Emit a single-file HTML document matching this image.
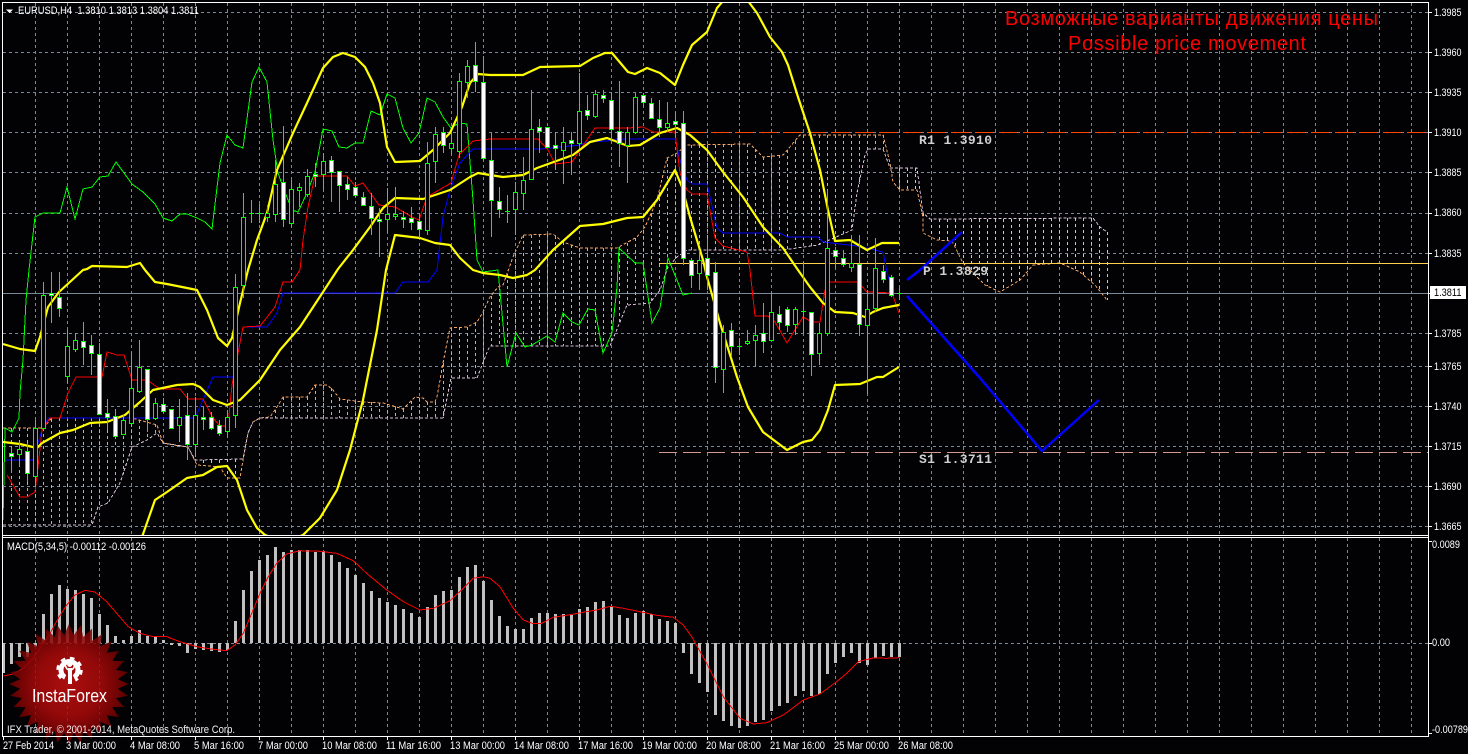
<!DOCTYPE html>
<html><head><meta charset="utf-8"><title>EURUSD,H4</title>
<style>
html,body{margin:0;padding:0;background:#020205;width:1468px;height:754px;overflow:hidden}
svg{display:block}
text{font-family:"Liberation Sans","Noto Sans CJK SC",sans-serif;font-size:11px;fill:#fff}
.m{font-family:"Liberation Mono",monospace;font-weight:bold;font-size:13px;fill:#d0d0d0}
.thin{shape-rendering:crispEdges}
</style></head><body>
<svg id="s" xmlns="http://www.w3.org/2000/svg" width="1468" height="754" viewBox="0 0 1468 754">
<defs>
<clipPath id="cm"><rect x="3" y="3" width="1425" height="532"/></clipPath>
<clipPath id="cs"><rect x="3" y="539" width="1425" height="197"/></clipPath>
<radialGradient id="rg" cx="50%" cy="50%" r="50%"><stop offset="0" stop-color="#c81010"/><stop offset=".55" stop-color="#aa0a0a"/><stop offset="1" stop-color="#6a0000"/></radialGradient>
</defs>
<rect width="1468" height="754" fill="#020205"/>
<g id="grid" shape-rendering="crispEdges" stroke="#778899" stroke-dasharray="3 3" fill="none"></g>
<g clip-path="url(#cm)">
<g id="cloud" shape-rendering="crispEdges" fill="none" stroke-dasharray="3 3"></g>
<polyline id="spA" class="thin" fill="none" stroke="#f4a460" stroke-dasharray="3 2"/>
<polyline id="spB" class="thin" fill="none" stroke="#d8bfd8" stroke-dasharray="3 2"/>
<path d="M659 263.500H1428" stroke="#ffd050" fill="none" shape-rendering="crispEdges"/>
<path d="M687 132.500H1428" stroke="#ff4500" stroke-dasharray="18 6" fill="none" shape-rendering="crispEdges"/>
<path d="M659 452.500H1428" stroke="#d09a8c" stroke-dasharray="18 6" fill="none" shape-rendering="crispEdges"/>
<polyline class="thin" fill="none" stroke="#00ff00" points="3,520 5,428 12,432 19,418 20,393 23,360 26,300 29,270 35,217 43,213 60,213 67,187 75,219 83,189 92,187 100,177 108,176 116,162 132,184 143,192 155,204 163,218 172,221 180,214 187,214 197,218 205,222 212,229 220,163 227,135 235,145 243,148 252,82 259,67 267,82 273,140 278,173 283,187 292,210 298,212 307,193 315,172 323,129 332,131 339,147 347,148 355,143 363,143 371,111 380,115 387,94 395,98 403,128 411,143 419,133 427,98 435,102 443,117 451,128 459,123 467,124 473,200 477,260 483,272 498,270 507,367 516,333 525,347 532,345 547,336 555,342 563,313 572,322 579,325 588,309 595,310 603,353 612,333 617,287 619,248 635,263 643,263 652,323 660,308 668,258 683,295 692,293"/>
<polyline class="thin" fill="none" stroke="#0000ff" points="5,460 33,460 42,430 48,418 195,418 213,377 233,377 243,327 267,327 277,313 283,293 395,293 403,282 428,282 437,270 443,217 450,190 460,163 473,149 540,149 580,145 587,142 607,141 617,139 675,139 680,160 687,180 692,184 707,184 717,228 723,233 780,233 787,237 818,237 823,242 857,246 867,248 883,252 887,272 892,290"/>
<polyline class="thin" fill="none" stroke="#ff0000" points="7,475 20,497 27,497 35,492 38,467 42,430 50,418 60,418 68,393 76,377 102,377 107,352 117,355 124,355 132,380 147,380 160,389 180,389 188,399 203,399 213,418 220,426 228,426 232,385 243,327 260,326 275,307 283,282 292,282 300,270 303,240 308,207 315,176 347,176 355,186 363,183 379,205 395,207 412,217 419,220 427,197 451,183 459,155 473,141 490,139 538,139 548,150 555,164 572,162 595,128 628,128 643,127 653,132 675,132 680,173 687,190 692,194 707,194 715,238 723,246 747,252 750,270 755,316 768,316 775,322 787,343 803,317 812,322 820,322 825,290 829,282 858,282 867,292 892,293 899,313"/>
<g fill="none" stroke="#ffff00" stroke-width="2.2" stroke-linejoin="round">
<polyline points="3,344 20,349 35,351 40,337 48,307 59,292 83,270 87,269 92,266 127,267 140,263 145,270 155,282 167,284 197,290 207,310 218,338 227,346 232,338 240,303 248,270 257,240 267,213 277,170 293,133 307,103 323,68 333,57 343,53 355,57 365,67 373,83 380,103 387,147 395,162 420,161 433,150 450,133 462,107 470,83 478,74 490,75 523,75 540,67 580,66 593,58 605,53 612,53 628,72 635,74 647,68 660,73 675,85 683,65 692,45 707,32 717,8 723,1 735,-6 748,1 757,13 770,37 782,52 788,65 798,97 810,133 820,170 828,210 835,241 850,240 867,250 882,243 899,243"/>
<polyline points="3,442 20,444 37,448 42,443 60,433 73,430 90,423 107,422 125,415 140,402 153,390 177,385 193,384 200,387 213,400 227,405 240,400 260,380 280,350 300,327 323,292 338,269 353,250 370,227 383,208 395,198 423,199 450,190 470,177 478,173 490,175 503,177 523,175 537,168 573,155 590,142 607,138 628,146 640,145 660,133 677,128 690,135 707,150 723,172 743,197 763,227 783,248 798,270 810,287 823,303 835,312 853,313 865,317 873,312 883,308 899,305"/>
<polyline points="142,537 155,500 167,492 187,478 203,475 217,467 227,466 237,480 247,510 257,528 265,535 285,542 303,535 320,518 337,490 350,450 363,400 377,330 386,270 395,235 420,238 435,243 450,245 460,258 473,270 483,273 500,275 513,278 527,275 535,270 553,250 580,226 603,224 627,218 643,217 657,200 675,170 682,187 690,217 703,260 707,277 720,323 737,377 748,407 763,432 787,450 803,442 812,440 820,430 828,410 835,385 860,384 877,377 883,377 899,367"/>
</g>
<g id="candles" shape-rendering="crispEdges"></g>
<g fill="none" stroke="#0000ff" stroke-width="2.5">
<polyline points="907,280 920,270 962,232"/>
<polyline points="907,296 980,378 1042,451 1099,400"/>
</g>
</g>
<g clip-path="url(#cs)">
<g id="bars" shape-rendering="crispEdges" fill="#c0c0c0"></g>
<polyline id="sig" class="thin" fill="none" stroke="#ff0000"/>
</g>
<polygon id="star" fill="url(#rg)" fill-opacity=".86"/>
<g fill="none" stroke="#fff">
<circle cx="69.500" cy="670" r="8.500" stroke-width="5"/>
<circle cx="69.500" cy="670" r="11.500" stroke-width="3.500" stroke-dasharray="4.500 4.530"/>
</g>
<path d="M62 684L69.500 668L77 684Z" fill="#a80c0c"/>
<rect x="68" y="668" width="4" height="16" fill="#fff"/>
<circle cx="69.700" cy="664.500" r="2.500" fill="#fff"/>
<path d="M65 664Q66 670 70 670Q74 670 75 664" fill="none" stroke="#fff" stroke-width="1.600"/>
<text x="32" y="702" textLength="75" lengthAdjust="spacingAndGlyphs" style="font-size:18px">InstaForex</text>
<g shape-rendering="crispEdges" fill="#fff" id="frame">
<rect x="2" y="2" width="1427" height="1"/>
<rect x="2" y="2" width="1" height="734"/>
<rect x="1428" y="2" width="1" height="734"/>
<rect x="2" y="535" width="1427" height="1"/>
<rect x="2" y="537" width="1427" height="1"/>
<rect x="2" y="736" width="1427" height="1"/>
</g>
<rect x="1430" y="286" width="36" height="13" fill="#fff" shape-rendering="crispEdges"/>
<path d="M6 9.500H13L9.500 13Z" fill="#fff"/>
<g lengthAdjust="spacingAndGlyphs">
<text x="18" y="14" textLength="181" lengthAdjust="spacingAndGlyphs">EURUSD,H4&#160;&#160;1.3810 1.3813 1.3804 1.3811</text>
<text x="7" y="550" textLength="139" lengthAdjust="spacingAndGlyphs">MACD(5,34,5) -0.00112 -0.00126</text>
<text x="7" y="733" textLength="228" lengthAdjust="spacingAndGlyphs" fill-opacity=".95">IFX Trader, © 2001-2014, MetaQuotes Software Corp.</text>
</g>
<text x="1005" y="25" textLength="373" style="font-size:20px;fill:#ff0000">Возможные варианты движения цены</text>
<text x="1068" y="50" textLength="238" style="font-size:20px;fill:#ff0000">Possible price movement</text>
<text class="m" x="919" y="144" textLength="73">R1 1.3910</text>
<text class="m" x="923" y="275" textLength="65">P 1.3829</text>
<text class="m" x="919" y="463" textLength="73">S1 1.3711</text>
<g>
<text x="1434" y="16" textLength="27.500" lengthAdjust="spacingAndGlyphs">1.3985</text><text x="1434" y="56" textLength="27.500" lengthAdjust="spacingAndGlyphs">1.3960</text><text x="1434" y="96" textLength="27.500" lengthAdjust="spacingAndGlyphs">1.3935</text><text x="1434" y="136" textLength="27.500" lengthAdjust="spacingAndGlyphs">1.3910</text><text x="1434" y="176" textLength="27.500" lengthAdjust="spacingAndGlyphs">1.3885</text><text x="1434" y="216" textLength="27.500" lengthAdjust="spacingAndGlyphs">1.3860</text><text x="1434" y="257" textLength="27.500" lengthAdjust="spacingAndGlyphs">1.3835</text>
<text x="1434" y="296" textLength="27.500" lengthAdjust="spacingAndGlyphs" style="fill:#000">1.3811</text>
<text x="1434" y="337" textLength="27.500" lengthAdjust="spacingAndGlyphs">1.3785</text><text x="1434" y="370" textLength="27.500" lengthAdjust="spacingAndGlyphs">1.3765</text><text x="1434" y="410" textLength="27.500" lengthAdjust="spacingAndGlyphs">1.3740</text><text x="1434" y="450" textLength="27.500" lengthAdjust="spacingAndGlyphs">1.3715</text><text x="1434" y="490" textLength="27.500" lengthAdjust="spacingAndGlyphs">1.3690</text><text x="1434" y="530" textLength="27.500" lengthAdjust="spacingAndGlyphs">1.3665</text>
<text x="1432" y="548" textLength="28" lengthAdjust="spacingAndGlyphs">0.0089</text><text x="1432" y="646" textLength="18" lengthAdjust="spacingAndGlyphs">0.00</text><text x="1432" y="733" textLength="36" lengthAdjust="spacingAndGlyphs">-0.00789</text>
</g>
<g>
<text x="3" y="749" textLength="51" lengthAdjust="spacingAndGlyphs">27 Feb 2014</text><text x="66" y="749" textLength="50" lengthAdjust="spacingAndGlyphs">3 Mar 00:00</text><text x="130" y="749" textLength="50" lengthAdjust="spacingAndGlyphs">4 Mar 08:00</text><text x="194" y="749" textLength="50" lengthAdjust="spacingAndGlyphs">5 Mar 16:00</text><text x="258" y="749" textLength="50" lengthAdjust="spacingAndGlyphs">7 Mar 00:00</text><text x="322" y="749" textLength="55" lengthAdjust="spacingAndGlyphs">10 Mar 08:00</text><text x="386" y="749" textLength="55" lengthAdjust="spacingAndGlyphs">11 Mar 16:00</text><text x="450" y="749" textLength="55" lengthAdjust="spacingAndGlyphs">13 Mar 00:00</text><text x="514" y="749" textLength="55" lengthAdjust="spacingAndGlyphs">14 Mar 08:00</text><text x="578" y="749" textLength="55" lengthAdjust="spacingAndGlyphs">17 Mar 16:00</text><text x="642" y="749" textLength="55" lengthAdjust="spacingAndGlyphs">19 Mar 00:00</text><text x="706" y="749" textLength="55" lengthAdjust="spacingAndGlyphs">20 Mar 08:00</text><text x="770" y="749" textLength="55" lengthAdjust="spacingAndGlyphs">21 Mar 16:00</text><text x="834" y="749" textLength="55" lengthAdjust="spacingAndGlyphs">25 Mar 00:00</text><text x="898" y="749" textLength="55" lengthAdjust="spacingAndGlyphs">26 Mar 08:00</text>
</g>
</svg>
<script>
(function(){
function $(i){return document.getElementById(i)}
var h='',ys=[12,52,92,132,172,213,253,333,366,406,446,486,526,643];
ys.forEach(function(y){h+='<path d="M3 '+(y+.5)+'H1428"/>'});
h+='<path d="M3 293.500H1428" stroke-dasharray="none"/>';
for(var x=35;x<1428;x+=32){h+='<path d="M'+(x+.5)+' 3V535M'+(x+.5)+' 538V736"/>'}
$('grid').innerHTML=h;
var A=[3,428,43,428,52,418,132,418,157,425,163,443,180,446,188,447,197,465,220,467,227,478,240,478,243,460,248,433,253,422,260,418,270,417,277,407,283,397,307,397,315,385,327,385,333,390,340,399,363,402,383,403,403,409,415,397,423,398,427,402,435,402,437,397,443,363,450,328,467,327,477,322,483,312,490,297,498,287,503,285,513,257,523,235,553,234,563,242,580,248,617,248,637,237,645,227,657,200,667,158,677,153,687,145,750,144,763,157,783,155,800,135,883,135,890,163,893,182,900,190,917,190,923,217,923,233,937,240,952,241,963,263,985,285,1000,292,1020,280,1033,265,1060,263,1080,272,1095,285,1107,300];
var B=[3,525,92,525,98,507,108,503,120,483,132,447,147,440,157,433,163,443,188,447,195,460,243,459,248,433,253,422,260,418,443,418,451,378,477,378,488,350,490,346,610,346,627,305,650,303,660,290,668,267,677,257,687,250,783,250,818,245,852,230,857,193,865,155,868,149,883,149,890,168,917,168,923,213,930,219,1093,218,1100,227,1107,232];
function pts(a){var s='';for(var i=0;i<a.length;i+=2)s+=a[i]+','+a[i+1]+' ';return s}
function at(a,x){for(var i=0;i<a.length-2;i+=2){if(x>=a[i]&&x<=a[i+2]){var d=a[i+2]-a[i];return d?a[i+1]+(a[i+3]-a[i+1])*(x-a[i])/d:a[i+1]}}return a[a.length-1]}
$('spA').setAttribute('points',pts(A));$('spB').setAttribute('points',pts(B));
h='';
for(x=11;x<=1107;x+=8){var a=Math.round(at(A,x)),b=Math.round(at(B,x));if(Math.abs(a-b)<3)continue;
h+='<path d="M'+(x+.5)+' '+Math.min(a,b)+'V'+Math.max(a,b)+'" stroke="'+(a<b?'#f4a460':'#d8bfd8')+'"/>'}
$('cloud').innerHTML=h;
var C=[[453,456,447,473,1],[449,454,442,467,0],[451,473,443,482,1],[428,476,420,487,0],[295,428,282,430,0],[293,295,272,323,1],[297,308,272,317,1],[346,376,330,383,0],[340,349,333,352,0],[341,347,322,365,1],[345,353,335,375,1],[354,414,343,415,1],[413,417,399,430,1],[416,436,409,438,1],[420,434,415,435,0],[388,423,352,423,0],[367,391,340,393,0],[369,419,369,432,1],[403,418,398,420,0],[404,411,398,413,1],[409,428,409,429,1],[417,425,399,442,0],[415,444,393,460,1],[415,444,397,457,0],[417,419,407,430,1],[417,428,412,430,1],[425,433,420,436,1],[417,431,410,438,0],[287,415,274,428,0],[217,285,193,298,0],
[213,214,200,223,2],[213,214,204,223,2],[213,217,205,222,0],[184,214,160,222,0],[182,219,126,227,1],[189,223,180,227,0],[187,190,183,207,0],[176,194,169,197,0],[174,176,163,187,1],[161,174,153,190,0],[160,172,156,202,1],[171,185,171,212,1],[184,189,177,200,1],[187,195,182,197,1],[197,205,192,206,1],[206,218,193,235,1],[219,221,208,257,1],[214,219,188,233,0],[214,216,187,220,0],[217,219,211,228,1],[218,222,207,230,1],[221,229,213,238,1],[163,230,142,235,0],[134,161,127,183,0],[132,145,127,153,1],[143,148,132,155,0],[81,151,73,158,0],[66,82,60,98,0],[65,81,42,92,1],[82,158,56,160,1],
[160,200,133,237,1],[201,209,187,218,1],[211,212,195,223,2],[192,209,182,235,0],[180,193,157,210,0],[129,179,90,180,0],[127,131,119,153,1],[127,147,127,148,1],[145,148,132,170,1],[142,150,127,184,0],[140,143,132,175,1],[111,143,73,147,0],[110,115,95,120,1],[94,116,90,118,0],[95,98,90,103,1],[100,129,92,140,1],[131,143,81,167,1],[132,145,127,183,0],[97,132,93,134,0],[95,102,93,107,1],[103,118,98,119,1],[119,127,100,137,1],[123,127,102,132,0],[121,124,112,138,1],[123,258,111,265,1],[260,275,258,288,1],[260,273,250,290,0],[258,275,238,290,1],[272,367,262,383,1],[332,369,325,393,0],[330,346,323,357,1],[346,347,338,355,2],[341,343,330,345,0],[335,340,325,367,0],[333,341,303,353,1],[312,340,293,341,0],[314,322,306,330,1],[309,325,307,332,1],[309,324,307,335,0],[311,312,262,333,2],[312,354,312,376,1],[333,353,323,365,0],[248,333,190,336,0],[250,256,247,268,1],[258,264,250,267,1],[263,267,235,272,0],[264,324,235,336,1],[309,325,290,394,0],[268,308,238,312,0],[271,279,265,283,1],[277,295,275,297,1],[293,294,286,300,2]];
h='';
C.forEach(function(c,i){x=11+8*i;
h+='<rect x="'+x+'" y="'+c[2]+'" width="1" height="'+(c[3]-c[2])+'" fill="#00ff00"/>';
if(c[4]==2){h+='<rect x="'+(x-2)+'" y="'+c[0]+'" width="5" height="1" fill="#00ff00"/>';return}
h+='<rect x="'+(x-2)+'" y="'+c[0]+'" width="5" height="'+(c[1]-c[0]+1)+'" fill="#00ff00"/>';
h+='<rect x="'+(x-1)+'" y="'+(c[0]+1)+'" width="3" height="'+Math.max(1,c[1]-c[0]-1)+'" fill="'+(c[4]?'#fff':'#020205')+'"/>';
});
$('candles').innerHTML=h;
var M=[430,403,382,380,350,253,192,165,177,180,192,204,252,285,318,330,318,300,318,320,330,345,348,369,358,360,362,365,360,273,180,123,90,75,51,66,60,60,60,66,63,75,96,114,135,159,183,204,216,225,237,249,261,231,195,183,180,141,111,105,153,210,258,288,297,297,264,249,249,252,252,255,237,231,216,213,231,255,264,249,243,252,267,273,279,369,432,459,486,555,573,588,594,588,576,570,543,528,519,498,483,498,492,432,400,381,369,399,405,384,378,381,381];
h='';
M.forEach(function(z,i){x=3+8*i;var y=Math.round(530+z/3);var t=Math.min(y,643),b=Math.max(y,643);
h+='<rect x="'+(x-1)+'" y="'+t+'" width="3" height="'+(b-t)+'"/>'});
$('bars').innerHTML=h;
var S=[10,438,40,432,70,415,100,385,130,340,150,310,175,265,200,225,225,195,255,181,285,186,320,215,350,250,385,290,420,310,460,320,500,320,540,335,590,350,640,358,680,362,705,345,730,310,755,250,780,190,805,140,830,100,860,72,900,62,960,64,1010,70,1060,92,1100,130,1160,180,1210,215,1260,240,1300,235,1350,212,1390,175,1420,145,1450,140,1470,145];
var S2=[30,170,70,235,100,270,130,281,155,280,190,262,240,254,290,245,320,240,360,229,400,235,450,245,500,256,550,262,580,285,605,320,650,400,700,500,750,565,790,582,830,578,880,555,940,510,990,492,1040,455,1070,430,1105,395,1150,384,1190,385,1228,383];
var p=[];for(var i=0;i<S.length;i+=2){p.push((S[i]/3).toFixed(1)+','+(530+S[i+1]/3).toFixed(1))}
for(i=0;i<S2.length;i+=2){p.push((490+S2[i]/3).toFixed(1)+','+(530+S2[i+1]/3).toFixed(1))}
$('sig').setAttribute('points',p.join(' '));
var st=[],n=32;for(i=0;i<n*2;i++){var r=i%2?49:60,t=Math.PI*i/n-Math.PI/2;st.push((69+r*Math.cos(t)).toFixed(1)+','+(684+r*Math.sin(t)).toFixed(1))}
$('star').setAttribute('points',st.join(' '));
h=$('frame').innerHTML;
[12,52,92,132,172,213,253,293,333,366,406,446,486,526,541,643,733].forEach(function(y){h+='<rect x="1429" y="'+y+'" width="3" height="1"/>'});
for(x=3;x<=899;x+=64){h+='<rect x="'+x+'" y="737" width="1" height="3"/>'}
$('frame').innerHTML=h;
})();
</script>
</body></html>
